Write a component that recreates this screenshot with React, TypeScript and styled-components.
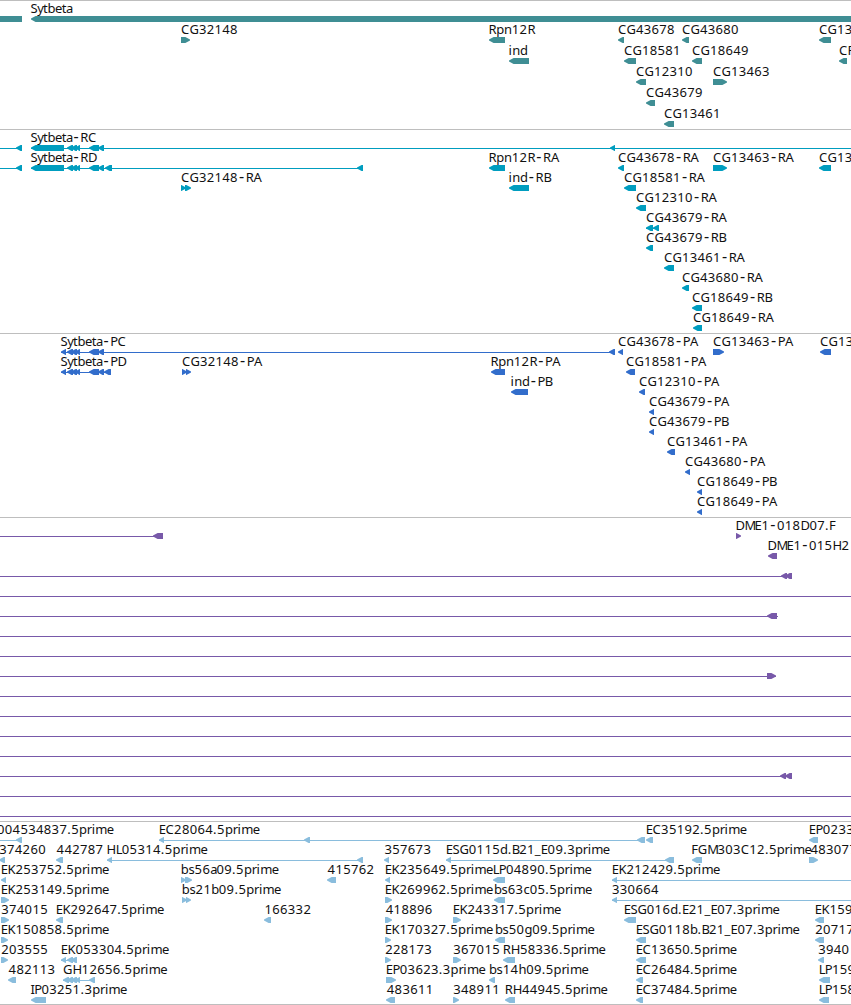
import React from "react";
import styled, { createGlobalStyle } from "styled-components";

const GlobalStyle = createGlobalStyle`
  html, body { margin: 0; padding: 0; background: #fff; }
`;

type Direction = "L" | "R" | "-";
/** direction, start, end */
type Segment = [Direction, number, number];

interface Feature {
  label?: string;
  at?: number;
  line?: [number, number];
  parts: Segment[];
}

interface TrackData {
  id: string;
  color: string;
  pitch: number;
  lanes: Feature[][];
}

const Browser = styled.main`
  display: flex;
  flex-direction: column;
  width: 851px;
  height: 1005px;
  overflow: hidden;
  background: #fff;
`;

const Track = styled.section`
  display: flex;
  flex: none;
  flex-direction: column;
  padding-bottom: 3px;
  border-top: 1px solid #bebebe;

  &:first-child {
    padding-bottom: 2px;
  }

  &:last-child {
    padding-bottom: 2px;
    border-bottom: 1px solid #bebebe;
  }
`;

const Lane = styled.svg<{ $pitch: number; $color: string }>`
  display: block;
  flex: none;
  width: 851px;
  height: ${(p) => p.$pitch}px;
  overflow: visible;
  fill: ${(p) => p.$color};
`;

const Label = styled.text`
  font-family: "Noto Sans", "Open Sans", sans-serif;
  font-size: 13px;
  fill: #111;
  white-space: pre;
`;

const Dash = styled.tspan`
  font-size: 16px;
`;

const ADVANCE: Record<string, number> = {
  A: 8, B: 7.4, C: 8.5, D: 9, E: 6.8, F: 6.6, G: 9.4, H: 9.2, I: 3.6, K: 7.9,
  L: 6, M: 10.2, P: 7.2, R: 7.9, S: 6.8,
  a: 6.3, b: 7.6, c: 6.3, d: 7.8, e: 6.7, g: 7.8, h: 7.8, i: 3.6, m: 11.5,
  n: 7.7, p: 7.8, r: 4.9, s: 6.2, t: 4.4, y: 5.8,
  ".": 4, "-": 7.8, _: 6,
};

function glyphPositions(text: string, start: number): string {
  let x = start + 0.4;
  return Array.from(text)
    .map((ch) => {
      const at = ch === "-" ? x + 1 : x;
      x += ADVANCE[ch] ?? 7.8;
      return at.toFixed(1);
    })
    .join(" ");
}

const TOP = 15;

function arrow([dir, a, b]: Segment): string {
  const head = Math.min(4.6, b - a);
  const bottom = TOP + 6;
  const mid = TOP + 3;
  if (dir === "L") {
    return `M${a} ${mid - 0.6}L${a + head} ${TOP}H${b}V${bottom}H${a + head}L${a} ${mid + 0.6}Z`;
  }
  if (dir === "R") {
    return `M${b} ${mid - 0.6}L${b - head} ${TOP}H${a}V${bottom}H${b - head}L${b} ${mid + 0.6}Z`;
  }
  return `M${a} ${TOP}H${b}V${bottom}H${a}Z`;
}

const f = (
  label: string | undefined,
  at: number,
  parts: Segment[],
  line?: [number, number]
): Feature => ({ label, at, parts, line });

const L = (a: number, b: number): Segment => ["L", a, b];
const R = (a: number, b: number): Segment => ["R", a, b];
const span = (a = 0, b = 851): Feature => ({ parts: [], line: [a, b] });

const exons: Segment[] = [L(67, 73), L(71, 77), L(75, 80), L(89, 99), L(98, 104)];

const tracks: TrackData[] = [
  {
    id: "genes",
    color: "#3f8e94",
    pitch: 21,
    lanes: [
      [f(undefined, 0, [["-", 0, 22]]), f("Sytbeta", 30, [L(31, 860)])],
      [
        f("CG32148", 180.6, [R(181, 190)]),
        f("Rpn12R", 488, [L(489, 505)]),
        f("CG43678", 617.6, [L(618, 624)]),
        f("CG43680", 681.6, [L(682, 689)]),
        f("CG13", 818.6, [L(819, 831)]),
      ],
      [
        f("ind", 508.2, [L(509, 529)]),
        f("CG18581", 623.6, [L(624, 636)]),
        f("CG18649", 691.6, [L(692, 702)]),
        f("CR", 838.6, [L(839, 847)]),
      ],
      [f("CG12310", 635.6, [L(636, 646)]), f("CG13463", 712.6, [R(713, 727)])],
      [f("CG43679", 645.6, [L(646, 655)])],
      [f("CG13461", 663.6, [L(664, 674)])],
    ],
  },
  {
    id: "transcripts",
    color: "#009dbf",
    pitch: 20,
    lanes: [
      [
        f(undefined, 0, [L(16, 22)], [0, 22]),
        f("Sytbeta-RC", 30, [L(31, 64), ...exons, L(610, 615)], [31, 851]),
      ],
      [
        f(undefined, 0, [L(16, 22)], [0, 22]),
        f("Sytbeta-RD", 30, [L(31, 64), ...exons, L(105, 112), L(357, 363)], [31, 363]),
        f("Rpn12R-RA", 488, [L(489, 505)]),
        f("CG43678-RA", 617.6, [L(618, 624)]),
        f("CG13463-RA", 712.6, [R(713, 727)]),
        f("CG13", 818.6, [L(819, 831)]),
      ],
      [
        f("CG32148-RA", 180.6, [R(181, 186), R(185, 191)]),
        f("ind-RB", 508.2, [L(509, 529)]),
        f("CG18581-RA", 623.6, [L(624, 636)]),
      ],
      [f("CG12310-RA", 635.6, [L(636, 646)])],
      [f("CG43679-RA", 645.6, [L(646, 653), L(653, 659)], [646, 659])],
      [f("CG43679-RB", 645.6, [L(646, 653)])],
      [f("CG13461-RA", 663.6, [L(664, 674)])],
      [f("CG43680-RA", 681.6, [L(682, 689)])],
      [f("CG18649-RB", 691.6, [L(692, 702)])],
      [f("CG18649-RA", 692.6, [L(693, 702)])],
    ],
  },
  {
    id: "proteins",
    color: "#326dcb",
    pitch: 20,
    lanes: [
      [
        f("Sytbeta-PC", 60, [L(61, 66), ...exons, L(609, 615)], [61, 615]),
        f("CG43678-PA", 617.6, [L(618, 623)]),
        f("CG13463-PA", 712.6, [R(713, 724)]),
        f("CG13", 819.6, [L(820, 831)]),
      ],
      [
        f("Sytbeta-PD", 60, [L(61, 66), ...exons, L(104, 111)], [61, 111]),
        f("CG32148-PA", 181.6, [R(182, 187), R(186, 191)]),
        f("Rpn12R-PA", 490, [L(491, 505)]),
        f("CG18581-PA", 625.6, [L(626, 635)]),
      ],
      [f("ind-PB", 510.2, [L(511, 528)]), f("CG12310-PA", 638.6, [L(639, 645)])],
      [f("CG43679-PA", 648.6, [L(649, 654)])],
      [f("CG43679-PB", 648.6, [L(649, 654)])],
      [f("CG13461-PA", 666.6, [L(667, 675)])],
      [f("CG43680-PA", 684.6, [L(685, 690)])],
      [f("CG18649-PB", 696.6, [L(697, 702)])],
      [f("CG18649-PA", 696.6, [L(697, 702)])],
    ],
  },
  {
    id: "clones",
    color: "#7859a9",
    pitch: 20,
    lanes: [
      [f(undefined, 0, [L(153, 163)], [0, 163]), f("DME1-018D07.F", 735, [R(736, 741)])],
      [f("DME1-015H2", 767, [L(768, 777)])],
      [f(undefined, 0, [L(781, 787), L(785, 792)], [0, 791])],
      [span()],
      [f(undefined, 0, [L(767, 777)], [0, 778])],
      [span()],
      [span()],
      [f(undefined, 0, [R(767, 776)], [0, 776])],
      [span()],
      [span()],
      [span()],
      [span()],
      [f(undefined, 0, [L(780, 786), L(785, 792)], [0, 791])],
      [span()],
      [span()],
    ],
  },
  {
    id: "ests",
    color: "#8abddd",
    pitch: 20,
    lanes: [
      [
        f("004534837.5prime", -3.4, [L(16, 22)], [0, 22]),
        f("EC28064.5prime", 158.4, [L(159, 164), L(304, 310), L(637, 645)], [159, 645]),
        f("EC35192.5prime", 645.4, [L(646, 653)]),
        f("EP0233", 808.4, [L(809, 818)]),
      ],
      [
        f("374260", -1.2, [L(-1, 5)]),
        f("442787", 56.2, [L(56, 63)]),
        f("HL05314.5prime", 106.2, [L(107, 112), L(357, 363)], [107, 363]),
        f("357673", 384, [L(384, 389)]),
        f("ESG0115d.B21_E09.3prime", 445.4, [L(446, 451), L(665, 674)], [446, 674]),
        f("FGM303C12.5prime", 690.8, [L(692, 702)]),
        f("483077", 810, [R(809, 818)]),
      ],
      [
        f("EK253752.5prime", 0.4, [L(1, 6)]),
        f("bs56a09.5prime", 180.4, [R(181, 186), R(185, 192)]),
        f("415762", 327.2, [L(327, 336)]),
        f("EK235649.5prime", 384.4, [L(385, 390)]),
        f("LP04890.5prime", 492.4, [L(493, 505)]),
        f("EK212429.5prime", 611.4, [L(612, 617)], [612, 851]),
      ],
      [
        f("EK253149.5prime", 0.4, [R(1, 9)]),
        f("bs21b09.5prime", 181.4, [R(182, 187), R(186, 191)]),
        f("EK269962.5prime", 384.4, [R(385, 392)]),
        f("bs63c05.5prime", 493.6, [L(494, 505)]),
        f("330664", 611.6, [L(612, 617)], [612, 851]),
      ],
      [
        f("374015", 0.8, [R(1, 9)]),
        f("EK292647.5prime", 55.4, [L(56, 63)]),
        f("166332", 264, [L(264, 271)]),
        f("418896", 385.4, [R(385, 392)]),
        f("EK243317.5prime", 452.4, [R(453, 461)]),
        f("ESG016d.E21_E07.3prime", 623.4, [L(624, 636)]),
        f("EK159", 814.4, [L(815, 824)]),
      ],
      [
        f("EK150858.5prime", 0.4, [R(1, 8)]),
        f("EK170327.5prime", 384.4, [R(385, 391)]),
        f("bs50g09.5prime", 494.6, [L(495, 505)]),
        f("ESG0118b.B21_E07.3prime", 635.4, [L(636, 646)]),
        f("20717", 814.8, [L(815, 824)]),
      ],
      [
        f("203555", 0.8, [R(1, 8)]),
        f("EK053304.5prime", 60.4, [L(61, 66), L(67, 73), L(71, 77)], [61, 77]),
        f("228173", 384.8, [R(385, 391)]),
        f("367015", 452.8, [R(453, 461)]),
        f("RH58336.5prime", 502.4, [L(503, 515)]),
        f("EC13650.5prime", 635.4, [L(636, 646)]),
        f("3940", 817.8, [L(818, 824)]),
      ],
      [
        f("482113", 8.2, [L(8, 16)]),
        f("GH12656.5prime", 62.6, [L(63, 69), L(67, 73), L(71, 77), L(75, 80), L(89, 95)], [63, 95]),
        f("EP03623.3prime", 385.4, [R(386, 396)]),
        f("bs14h09.5prime", 488.6, [L(489, 495)]),
        f("EC26484.5prime", 635.4, [L(636, 643)]),
        f("LP159", 818.4, [L(819, 830)]),
      ],
      [
        f("IP03251.3prime", 30.2, [L(31, 46)]),
        f("483611", 386.4, [L(386, 395)]),
        f("348911", 452.8, [R(453, 459)]),
        f("RH44945.5prime", 504.4, [L(505, 515)]),
        f("EC37484.5prime", 635.4, [L(636, 643)]),
        f("LP158", 818.4, [L(819, 829)]),
      ],
    ],
  },
];

function FeatureGlyph({ feature }: { feature: Feature }) {
  const { label, at = 0, parts, line } = feature;
  const [name, suffix] = (label ?? "").split("-");
  return (
    <g>
      {line && <rect x={line[0]} y={TOP + 3} width={line[1] - line[0]} height={1} />}
      {parts.map((part, i) => (
        <path key={i} d={arrow(part)} />
      ))}
      {label && (
        <Label x={glyphPositions(label, at)} y={12}>
          {name}
          {suffix && <Dash>-</Dash>}
          {suffix}
        </Label>
      )}
    </g>
  );
}

export default function App() {
  return (
    <>
      <GlobalStyle />
      <Browser>
        {tracks.map((track) => (
          <Track key={track.id}>
            {track.lanes.map((lane, i) => (
              <Lane key={i} $pitch={track.pitch} $color={track.color}>
                {lane.map((feature, j) => (
                  <FeatureGlyph key={j} feature={feature} />
                ))}
              </Lane>
            ))}
          </Track>
        ))}
      </Browser>
    </>
  );
}
